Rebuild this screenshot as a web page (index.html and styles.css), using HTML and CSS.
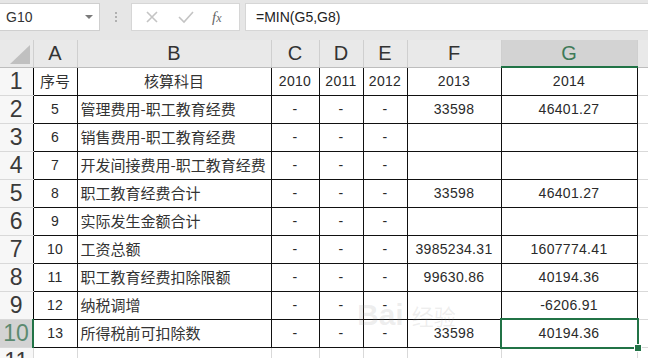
FILE: index.html
```html
<!DOCTYPE html>
<html>
<head>
<meta charset="utf-8">
<link rel="stylesheet" href="styles.css">
</head>
<body>
<div class="app">
  <div class="toolbar">
    <div class="namebox">
      <span class="ref">G10</span>
      <span class="caret"></span>
    </div>
    <div class="grip"><i></i><i></i><i></i></div>
    <div class="fxbox">
      <svg class="ic" width="16" height="16" viewBox="0 0 16 16"><path d="M3 3 L13 13 M13 3 L3 13" stroke="#c4c4c4" stroke-width="1.6" fill="none"/></svg>
      <svg class="ic" width="18" height="16" viewBox="0 0 18 16"><path d="M2 8 L7 13 L16 3" stroke="#c4c4c4" stroke-width="1.6" fill="none"/></svg>
      <span class="fx"><i>f</i><small>x</small></span>
    </div>
    <div class="formula">=MIN(G5,G8)</div>
  </div>
  <div class="sheet">
    <table class="grid">
      <colgroup>
        <col class="c-rh"><col class="c-a"><col class="c-b"><col class="c-c"><col class="c-d"><col class="c-e"><col class="c-f"><col class="c-g"><col class="c-h">
      </colgroup>
      <tr class="colhead">
        <th class="corner"><span class="tri"></span></th>
        <th>A</th><th>B</th><th>C</th><th>D</th><th>E</th><th>F</th><th class="sel">G</th><th></th>
      </tr>
      <tr><th class="rh">1</th><td class="ctr cn">序号</td><td class="ctr cn">核算科目</td><td class="ctr">2010</td><td class="ctr">2011</td><td class="ctr">2012</td><td class="ctr">2013</td><td class="ctr">2014</td><td class="gl"></td></tr>
      <tr><th class="rh">2</th><td class="ctr">5</td><td class="cn">管理费用-职工教育经费</td><td class="ctr">-</td><td class="ctr">-</td><td class="ctr">-</td><td class="ctr">33598</td><td class="ctr">46401.27</td><td class="gl"></td></tr>
      <tr><th class="rh">3</th><td class="ctr">6</td><td class="cn">销售费用-职工教育经费</td><td class="ctr">-</td><td class="ctr">-</td><td class="ctr">-</td><td></td><td></td><td class="gl"></td></tr>
      <tr><th class="rh">4</th><td class="ctr">7</td><td class="cn">开发间接费用-职工教育经费</td><td class="ctr">-</td><td class="ctr">-</td><td class="ctr">-</td><td></td><td></td><td class="gl"></td></tr>
      <tr><th class="rh">5</th><td class="ctr">8</td><td class="cn">职工教育经费合计</td><td class="ctr">-</td><td class="ctr">-</td><td class="ctr">-</td><td class="ctr">33598</td><td class="ctr">46401.27</td><td class="gl"></td></tr>
      <tr><th class="rh">6</th><td class="ctr">9</td><td class="cn">实际发生金额合计</td><td class="ctr">-</td><td class="ctr">-</td><td class="ctr">-</td><td></td><td></td><td class="gl"></td></tr>
      <tr><th class="rh">7</th><td class="ctr">10</td><td class="cn">工资总额</td><td class="ctr">-</td><td class="ctr">-</td><td class="ctr">-</td><td class="ctr">3985234.31</td><td class="ctr">1607774.41</td><td class="gl"></td></tr>
      <tr><th class="rh">8</th><td class="ctr">11</td><td class="cn">职工教育经费扣除限额</td><td class="ctr">-</td><td class="ctr">-</td><td class="ctr">-</td><td class="ctr">99630.86</td><td class="ctr">40194.36</td><td class="gl"></td></tr>
      <tr><th class="rh">9</th><td class="ctr">12</td><td class="cn">纳税调增</td><td class="ctr">-</td><td class="ctr">-</td><td class="ctr">-</td><td></td><td class="ctr">-6206.91</td><td class="gl"></td></tr>
      <tr><th class="rh rsel">10</th><td class="ctr">13</td><td class="cn">所得税前可扣除数</td><td class="ctr">-</td><td class="ctr">-</td><td class="ctr">-</td><td class="ctr">33598</td><td class="ctr active">40194.36<span class="selbox"></span><span class="handle"></span></td><td class="gl"></td></tr>
      <tr class="last"><th class="rh">11</th><td class="gl"></td><td class="gl"></td><td class="gl"></td><td class="gl"></td><td class="gl"></td><td class="gl"></td><td class="gl"></td><td class="gl"></td></tr>
    </table>
    <div class="wm"><span class="wm1">Bai</span><span class="wm2">经验</span></div>
  </div>
</div>
</body>
</html>
```
FILE: styles.css
```css
html, body {
  margin: 0;
  padding: 0;
  background: #fff;
  overflow: hidden;
}
body {
  width: 648px;
  height: 358px;
  font-family: "Liberation Sans", "Noto Sans CJK SC", sans-serif;
}
.app {
  display: flex;
  flex-direction: column;
  width: 648px;
  height: 358px;
}
.toolbar {
  height: 40px;
  box-sizing: border-box;
  padding: 3px 0 9px 0;
  background: #e6e6e6;
  display: flex;
  align-items: stretch;
}
.namebox {
  width: 100px;
  box-sizing: border-box;
  background: #fff;
  border: 1px solid #cfcfcf;
  border-left: none;
  display: flex;
  align-items: center;
  justify-content: space-between;
  padding: 0 6px 0 6px;
}
.ref {
  font-size: 14px;
  color: #333;
}
.caret {
  width: 0;
  height: 0;
  border-left: 4px solid transparent;
  border-right: 4px solid transparent;
  border-top: 4px solid #7a7a7a;
}
.grip {
  width: 31px;
  display: flex;
  flex-direction: column;
  align-items: center;
  justify-content: center;
  gap: 2px;
}
.grip i {
  width: 2px;
  height: 2px;
  background: #b0b0b0;
}
.fxbox {
  width: 109px;
  box-sizing: border-box;
  background: #fff;
  border: 1px solid #d6d6d6;
  display: flex;
  align-items: center;
  padding-left: 12px;
  gap: 17px;
}
.fx {
  font-family: "Liberation Serif", serif;
  color: #666;
  font-size: 15px;
}
.fx small {
  font-size: 12px;
  font-style: italic;
}
.formula {
  margin-left: 5px;
  flex: 1;
  background: #fff;
  border: 1px solid #d6d6d6;
  border-right: none;
  font-size: 14px;
  color: #222;
  display: flex;
  align-items: center;
  padding-left: 10px;
}
.sheet {
  position: relative;
  flex: 1;
  overflow: hidden;
}
.grid {
  border-collapse: collapse;
  table-layout: fixed;
  width: 659px;
}
.c-rh { width: 33px; }
.c-a { width: 44px; }
.c-b { width: 194px; }
.c-c { width: 48px; }
.c-d { width: 44px; }
.c-e { width: 44px; }
.c-f { width: 94px; }
.c-g { width: 136px; }
.c-h { width: 22px; }
.grid th, .grid td {
  padding: 0;
  overflow: hidden;
  white-space: nowrap;
}
.colhead th {
  height: 26px;
  background: #e9e9e9;
  border-right: 1px solid #cfcfcf;
  border-bottom: 1px solid #bdbdbd;
  font-weight: normal;
  font-size: 20px;
  color: #333;
  text-align: center;
  vertical-align: middle;
  line-height: 26px;
}
.colhead th.sel {
  background: #d3d3d3;
  color: #3f7a58;
  border-bottom: 2px solid #217346;
}
.corner {
  position: relative;
}
.tri {
  position: absolute;
  right: 3px;
  bottom: 3px;
  width: 0;
  height: 0;
  border-left: 20px solid transparent;
  border-bottom: 19px solid #c0c0c0;
}
.grid tr {
  height: 28px;
}
.grid .colhead {
  height: 26px;
}
.rh {
  background: #f7f7f7;
  border-right: 1px solid #000;
  border-bottom: 1px solid #d9d9d9;
  font-weight: normal;
  font-size: 23px;
  color: #3a3a3a;
  text-align: center;
  line-height: 26px;
}
.rh.rsel {
  background: #d3d3d3;
  color: #5c8a70;
  border-right: 2px solid #217346;
}
.grid td {
  border: 1px solid #111;
  font-size: 14px;
  line-height: 26px;
  color: #2a2a2a;
  padding-left: 3px;
  letter-spacing: 0.3px;
}
.grid td.cn {
  font-size: 15px;
  letter-spacing: 0;
  font-family: "Noto Sans CJK SC", sans-serif;
  color: #333;
}
.grid td.ctr {
  text-align: center;
  padding-left: 0;
}
.grid td.gl {
  border: 1px solid #d9d9d9;
  border-left-color: #111;
}
.last td.gl {
  border-top-color: #111;
  border-left-color: #d9d9d9;
}
.last .rh {
  border-right-color: #d9d9d9;
}
.grid td.active {
  position: relative;
  overflow: visible;
}
.selbox {
  position: absolute;
  left: -2px;
  top: -2px;
  right: -2px;
  bottom: -2px;
  border: 2px solid #217346;
}
.handle {
  position: absolute;
  right: -5px;
  bottom: -5px;
  width: 6px;
  height: 6px;
  background: #217346;
  border: 1px solid #fff;
}
.wm {
  position: absolute;
  left: 357px;
  top: 258px;
  pointer-events: none;
  color: rgba(150, 150, 150, 0.16);
}
.wm1 {
  font-size: 30px;
  font-weight: bold;
}
.wm2 {
  font-size: 22px;
  font-family: "Noto Sans CJK SC", sans-serif;
  margin-left: 8px;
}
```
